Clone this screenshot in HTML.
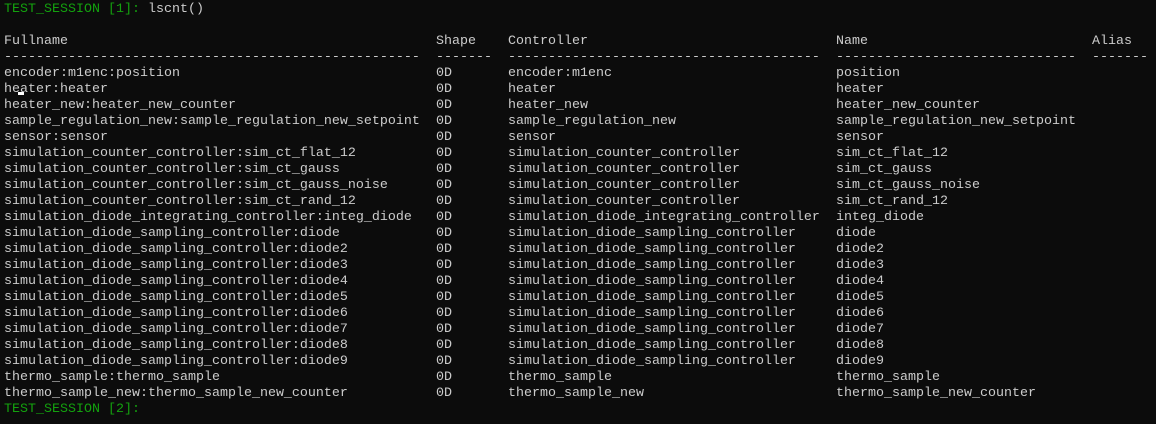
<!DOCTYPE html>
<html><head><meta charset="utf-8"><style>
html,body{margin:0;padding:0;background:#0c0c0c;width:1156px;height:424px;overflow:hidden}
.t{position:absolute;left:4px;top:2px;font-family:"Liberation Mono",monospace;font-size:13.33px;color:#cccccc;line-height:16px}
.r{height:16px;white-space:pre}
.r span{display:inline-block}
.a{width:432px}.b{width:72px}.c{width:328px}.d{width:256px}
.g{color:#13a10e}
.cur{position:absolute;left:18px;top:92px;width:6px;height:3px;background:#fff}
</style></head><body>
<div class="t"><div class="r"><span class="g">TEST_SESSION [1]: </span>lscnt()</div><div class="r"></div><div class="r"><span class="a">Fullname</span><span class="b">Shape</span><span class="c">Controller</span><span class="d">Name</span><span>Alias</span></div><div class="r"><span class="a">----------------------------------------------------</span><span class="b">-------</span><span class="c">---------------------------------------</span><span class="d">------------------------------</span><span>-------</span></div><div class="r"><span class="a">encoder:m1enc:position</span><span class="b">0D</span><span class="c">encoder:m1enc</span><span class="d">position</span></div><div class="r"><span class="a">heater:heater</span><span class="b">0D</span><span class="c">heater</span><span class="d">heater</span></div><div class="r"><span class="a">heater_new:heater_new_counter</span><span class="b">0D</span><span class="c">heater_new</span><span class="d">heater_new_counter</span></div><div class="r"><span class="a">sample_regulation_new:sample_regulation_new_setpoint</span><span class="b">0D</span><span class="c">sample_regulation_new</span><span class="d">sample_regulation_new_setpoint</span></div><div class="r"><span class="a">sensor:sensor</span><span class="b">0D</span><span class="c">sensor</span><span class="d">sensor</span></div><div class="r"><span class="a">simulation_counter_controller:sim_ct_flat_12</span><span class="b">0D</span><span class="c">simulation_counter_controller</span><span class="d">sim_ct_flat_12</span></div><div class="r"><span class="a">simulation_counter_controller:sim_ct_gauss</span><span class="b">0D</span><span class="c">simulation_counter_controller</span><span class="d">sim_ct_gauss</span></div><div class="r"><span class="a">simulation_counter_controller:sim_ct_gauss_noise</span><span class="b">0D</span><span class="c">simulation_counter_controller</span><span class="d">sim_ct_gauss_noise</span></div><div class="r"><span class="a">simulation_counter_controller:sim_ct_rand_12</span><span class="b">0D</span><span class="c">simulation_counter_controller</span><span class="d">sim_ct_rand_12</span></div><div class="r"><span class="a">simulation_diode_integrating_controller:integ_diode</span><span class="b">0D</span><span class="c">simulation_diode_integrating_controller</span><span class="d">integ_diode</span></div><div class="r"><span class="a">simulation_diode_sampling_controller:diode</span><span class="b">0D</span><span class="c">simulation_diode_sampling_controller</span><span class="d">diode</span></div><div class="r"><span class="a">simulation_diode_sampling_controller:diode2</span><span class="b">0D</span><span class="c">simulation_diode_sampling_controller</span><span class="d">diode2</span></div><div class="r"><span class="a">simulation_diode_sampling_controller:diode3</span><span class="b">0D</span><span class="c">simulation_diode_sampling_controller</span><span class="d">diode3</span></div><div class="r"><span class="a">simulation_diode_sampling_controller:diode4</span><span class="b">0D</span><span class="c">simulation_diode_sampling_controller</span><span class="d">diode4</span></div><div class="r"><span class="a">simulation_diode_sampling_controller:diode5</span><span class="b">0D</span><span class="c">simulation_diode_sampling_controller</span><span class="d">diode5</span></div><div class="r"><span class="a">simulation_diode_sampling_controller:diode6</span><span class="b">0D</span><span class="c">simulation_diode_sampling_controller</span><span class="d">diode6</span></div><div class="r"><span class="a">simulation_diode_sampling_controller:diode7</span><span class="b">0D</span><span class="c">simulation_diode_sampling_controller</span><span class="d">diode7</span></div><div class="r"><span class="a">simulation_diode_sampling_controller:diode8</span><span class="b">0D</span><span class="c">simulation_diode_sampling_controller</span><span class="d">diode8</span></div><div class="r"><span class="a">simulation_diode_sampling_controller:diode9</span><span class="b">0D</span><span class="c">simulation_diode_sampling_controller</span><span class="d">diode9</span></div><div class="r"><span class="a">thermo_sample:thermo_sample</span><span class="b">0D</span><span class="c">thermo_sample</span><span class="d">thermo_sample</span></div><div class="r"><span class="a">thermo_sample_new:thermo_sample_new_counter</span><span class="b">0D</span><span class="c">thermo_sample_new</span><span class="d">thermo_sample_new_counter</span></div><div class="r"><span class="g">TEST_SESSION [2]:</span></div></div>
<div class="cur"></div>
</body></html>
